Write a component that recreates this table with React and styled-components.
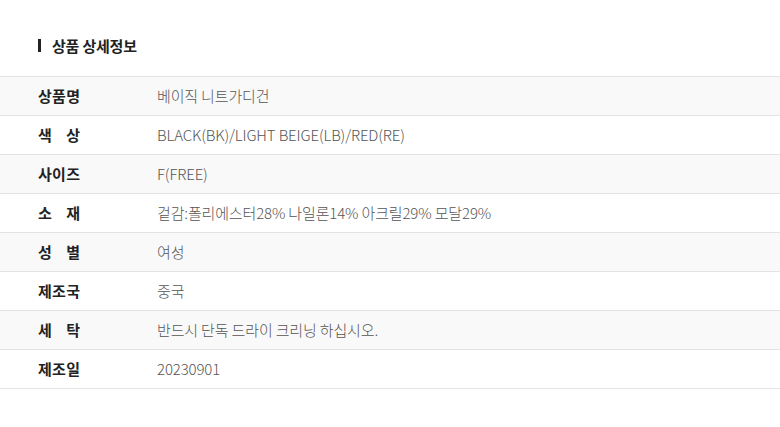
import React from 'react'
import styled, { createGlobalStyle } from 'styled-components'

const GlobalStyle = createGlobalStyle`
  body {
    margin: 0;
    background: #fff;
    font-family: "Noto Sans CJK KR", "Noto Sans", sans-serif;
  }
`

const Wrapper = styled.div`
  width: 780px;
  height: 427px;
  padding-top: 35px;
  box-sizing: border-box;
`

const Title = styled.h2`
  display: flex;
  align-items: center;
  gap: 11px;
  margin: 0 0 21px 38px;
  height: 20px;
  font-size: 15px;
  font-weight: 700;
  color: #222;
  letter-spacing: -0.2px;

  &::before {
    content: '';
    width: 3px;
    height: 13px;
    background: #222;
  }
`

const Table = styled.div`
  border-bottom: 1px solid #e4e4e4;
`

const Row = styled.div`
  display: flex;
  align-items: center;
  height: 39px;
  padding-bottom: 1px;
  box-sizing: border-box;
  border-top: 1px solid #e4e4e4;
  background: ${(p) => (p.$shaded ? '#f9f9f9' : '#fff')};
`

const Label = styled.div`
  display: flex;
  justify-content: space-between;
  width: 42px;
  margin-left: 38px;
  margin-right: 77px;
  font-size: 15px;
  font-weight: 700;
  color: #222;
`

const Value = styled.div`
  font-size: 15px;
  font-weight: 300;
  color: #555;
  letter-spacing: -0.15px;
`

const rows = [
  ['상품명', '베이직 니트가디건'],
  ['색 상', 'BLACK(BK)/LIGHT BEIGE(LB)/RED(RE)'],
  ['사이즈', 'F(FREE)'],
  ['소 재', '겉감:폴리에스터28% 나일론14% 아크릴29% 모달29%'],
  ['성 별', '여성'],
  ['제조국', '중국'],
  ['세 탁', '반드시 단독 드라이 크리닝 하십시오.'],
  ['제조일', '20230901'],
]

const App = () => (
  <Wrapper>
    <GlobalStyle />
    <Title>상품 상세정보</Title>
    <Table>
      {rows.map(([label, value], i) => (
        <Row key={label} $shaded={i % 2 === 0}>
          <Label>
            {label.replace(/ /g, '').split('').map((ch, j) => (
              <span key={j}>{ch}</span>
            ))}
          </Label>
          <Value>{value}</Value>
        </Row>
      ))}
    </Table>
  </Wrapper>
)

export default App
